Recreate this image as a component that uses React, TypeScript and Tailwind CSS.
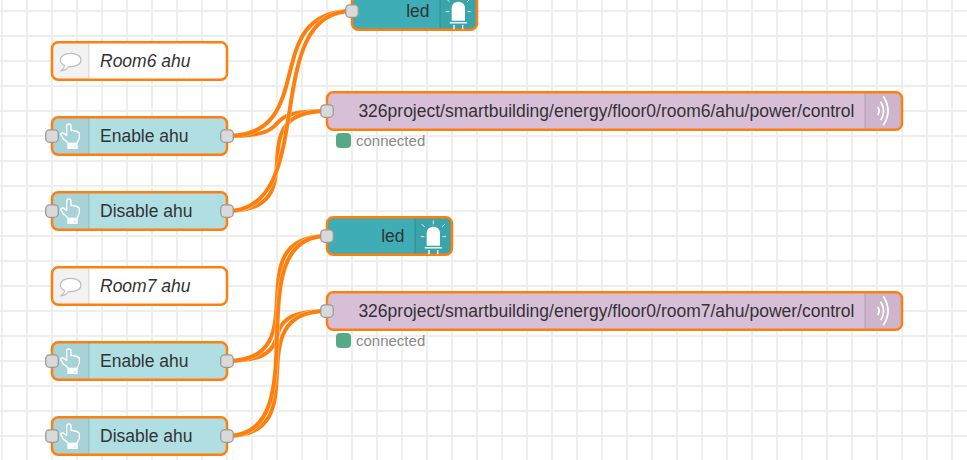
import React from 'react';

type Kind = 'comment' | 'button' | 'led' | 'mqtt';

interface FlowNode {
  kind: Kind;
  x: number;
  cy: number;
  w: number;
  label: string;
  status?: string;
}

const FILL: Record<Kind, string> = {
  comment: '#ffffff',
  button: '#b0dfe3',
  led: '#3fadb5',
  mqtt: '#d8bfd8',
};

const NODES: FlowNode[] = [
  { kind: 'led', x: 352, cy: 11, w: 125, label: 'led' },
  { kind: 'comment', x: 52, cy: 61, w: 175, label: 'Room6 ahu' },
  { kind: 'button', x: 52, cy: 136, w: 175, label: 'Enable ahu' },
  { kind: 'button', x: 52, cy: 211, w: 175, label: 'Disable ahu' },
  { kind: 'mqtt', x: 327, cy: 111, w: 575, label: '326project/smartbuilding/energy/floor0/room6/ahu/power/control', status: 'connected' },
  { kind: 'led', x: 327, cy: 236, w: 125, label: 'led' },
  { kind: 'comment', x: 52, cy: 286, w: 175, label: 'Room7 ahu' },
  { kind: 'button', x: 52, cy: 361, w: 175, label: 'Enable ahu' },
  { kind: 'button', x: 52, cy: 436, w: 175, label: 'Disable ahu' },
  { kind: 'mqtt', x: 327, cy: 311, w: 575, label: '326project/smartbuilding/energy/floor0/room7/ahu/power/control', status: 'connected' },
];

const WIRES: [number, number, number, number][] = [
  [227, 136, 327, 111],
  [227, 136, 352, 11],
  [227, 211, 327, 111],
  [227, 211, 352, 11],
  [227, 361, 327, 311],
  [227, 361, 327, 236],
  [227, 436, 327, 311],
  [227, 436, 327, 236],
];

// Bezier whose handles shorten when the two ports are close together.
function wirePath([x1, y1, x2, y2]: [number, number, number, number]) {
  const d = Math.hypot(x2 - x1, y2 - y1);
  const c = d < 125 ? 0.75 * d : 93.75;
  return `M${x1} ${y1}C${x1 + c} ${y1} ${x2 - c} ${y2} ${x2} ${y2}`;
}

function Icon({ kind }: { kind: Kind }) {
  if (kind === 'comment')
    return (
      <g transform="scale(.33333) translate(-36 -36)" fill="#fff" stroke="#bdbdbd" strokeWidth="3.5" strokeLinejoin="round">
        <path d="M73 106C65 102 61 97 61 90C61 78 74 70 92 70C110 70 123 78 123 90C123 102 110 110 92 110L86 110C80 118 73 122 62 123C69 118 74 113 73 106Z" />
      </g>
    );
  if (kind === 'button')
    return (
      <g transform="scale(.33333) translate(-36 -6)" fill="none" stroke="#fff" strokeWidth="4" strokeLinejoin="round">
        <path d="M83 84C80 77 76 76 71 73C68 70 67 65 63 61C60 56 64 53 69 54C74 55 76 60 80 62V33C80 25 93 25 93 33V47C98 45 101 46 103 49C108 47 111 48 112 51C116 51 118 54 118 58V68C118 74 112 78 112 84" />
        <path d="M82 83H113V102H82Z" fill="#fff" stroke="none" />
        <path d="M101 96H107" stroke="#a8d4d8" strokeWidth="3" />
      </g>
    );
  if (kind === 'led')
    return (
      <g transform="scale(.33333) translate(-321 -21)" fill="none" stroke="#fff" strokeWidth="3">
        <path d="M620 107V70C620 44 660 44 660 70V107Z" fill="#fff" stroke="none" />
        <path d="M614 113.500H666" strokeWidth="4" />
        <path d="M627 120V133M653 120V133" strokeWidth="4" />
        <path d="M640 31V43M605 42L614 51M675 42L666 51M602 80H613M667 80H678" opacity=".8" />
      </g>
    );
  return (
    <g transform="scale(.33333) translate(1299 -36)" fill="none" stroke="#fff" strokeWidth="5.500">
      <path d="M370 49Q398 93 370 136" />
      <path d="M362 65Q380 93 362 121" />
      <path d="M353 81Q362 93 353 105" />
    </g>
  );
}

function Port({ x }: { x: number }) {
  return <rect x={x - 6.25} y={12.75} width="12.5" height="12.5" rx="3.75" fill="#d9d9d9" stroke="#999" strokeWidth="1.25" />;
}

function NodeView({ node }: { node: FlowNode }) {
  const { kind, x, cy, w, label, status } = node;
  const right = kind === 'led' || kind === 'mqtt';
  const iconX = right ? w - 37.5 : 0;
  const shade = right
    ? `M${iconX} .25H${w - 6.25}a6.25 6.25 0 0 1 6.25 6.25v25a6.25 6.25 0 0 1 -6.25 6.25H${iconX}Z`
    : 'M37.5 .25H6.250a6.250 6.250 0 0 0 -6.250 6.250v25a6.250 6.250 0 0 0 6.250 6.250H37.5Z';
  const sep = right ? iconX + 0.6 : 36.9;
  return (
    <div className="absolute" style={{ left: x, top: cy - 19, width: w }}>
      <div className={`relative flex h-[38px] items-center ${right ? 'justify-end pr-[47.5px]' : 'pl-12'}`}>
        <svg className="absolute inset-0 overflow-visible" width={w} height="38">
          <rect x="0" y=".25" width={w} height="37.5" rx="6.25" fill={FILL[kind]} />
          <path d={shade} fill="#000" fillOpacity=".05" />
          <path d={`M${sep} 1V37`} stroke="#000" strokeOpacity=".1" strokeWidth="1.25" />
          <rect x="0" y=".25" width={w} height="37.5" rx="6.25" fill="none" stroke="#ff7f0e" strokeWidth="2.5" />
          <Icon kind={kind} />
          {kind !== 'comment' && <Port x={0} />}
          {kind === 'button' && <Port x={w} />}
        </svg>
        <span className={`relative whitespace-nowrap text-[17.5px] leading-5 text-[#333] ${kind === 'comment' ? 'italic' : ''}`}>{label}</span>
      </div>
      {status && (
        <div className="flex items-center gap-[5px] pl-[9px] pt-[2px]">
          <span className="mb-px size-[15px] rounded-[4px] bg-[#55aa88]" />
          <span className="text-[15px] leading-[18px] text-[#888]">{status}</span>
        </div>
      )}
    </div>
  );
}

export default function App() {
  return (
    <main className="relative h-[460px] w-[967px] overflow-hidden bg-white font-['Liberation_Sans',Arial,sans-serif]">
      <svg className="absolute inset-0" width="967" height="460">
        <defs>
          <pattern id="grid" x="1" y="10" width="25" height="25" patternUnits="userSpaceOnUse">
            <path d="M0 0H25V2H2V25H0Z" fill="#eeeeee" />
          </pattern>
        </defs>
        <rect width="967" height="460" fill="url(#grid)" />
        {WIRES.map((wire, i) => (
          <g key={i} fill="none">
            <path d={wirePath(wire)} stroke="#fff" strokeWidth="5" strokeOpacity=".6" />
            <path d={wirePath(wire)} stroke="#ff7f0e" strokeWidth="4" />
          </g>
        ))}
      </svg>
      {NODES.map((node, i) => (
        <NodeView key={i} node={node} />
      ))}
    </main>
  );
}
